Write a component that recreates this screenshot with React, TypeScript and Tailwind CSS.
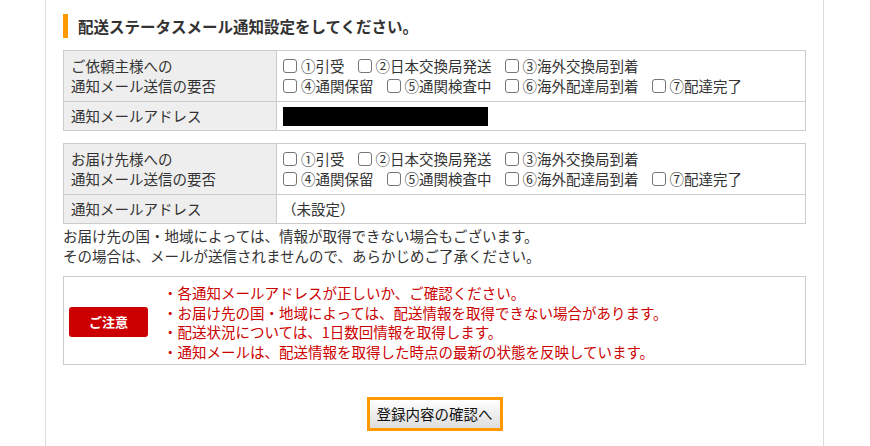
const font = { fontFamily: '"Noto Sans CJK JP", "Noto Sans", sans-serif' };

type Opt = { label: string };

const row1: Opt[] = [{ label: "①引受" }, { label: "②日本交換局発送" }, { label: "③海外交換局到着" }];
const row2: Opt[] = [
  { label: "④通関保留" },
  { label: "⑤通関検査中" },
  { label: "⑥海外配達局到着" },
  { label: "⑦配達完了" },
];

function Check({ label }: Opt) {
  return (
    <label className="flex items-center gap-[4px]">
      <input
        type="checkbox"
        className="m-0 block size-[14px] shrink-0 appearance-none rounded-[3px] border border-[#767676] bg-white"
      />
      <span>{label}</span>
    </label>
  );
}

function CheckRows() {
  return (
    <div className="flex flex-col">
      <div className="flex gap-[13px]">
        {row1.map((o) => (
          <Check key={o.label} {...o} />
        ))}
      </div>
      <div className="flex gap-[13px]">
        {row2.map((o) => (
          <Check key={o.label} {...o} />
        ))}
      </div>
    </div>
  );
}

function NotifyTable({ who, address }: { who: string; address: React.ReactNode }) {
  return (
    <table className="w-full border-collapse border border-[#cccccc]">
      <tbody>
        <tr>
          <th className="w-[213px] border border-[#cccccc] bg-[#eeeeee] px-[7px] py-[5px] text-left align-middle font-normal">
            {who}
            <br />
            通知メール送信の要否
          </th>
          <td className="border border-[#cccccc] px-[6px] py-[5px]">
            <CheckRows />
          </td>
        </tr>
        <tr>
          <th className="border border-[#cccccc] bg-[#eeeeee] px-[7px] py-[4px] text-left font-normal">
            通知メールアドレス
          </th>
          <td className="border border-[#cccccc] px-[5px] py-[4px]">{address}</td>
        </tr>
      </tbody>
    </table>
  );
}

export default function App() {
  return (
    <div className="min-h-[446px] bg-white text-[14.5px] leading-5 text-[#333333]" style={font}>
      <div className="mx-[45px] min-h-[446px] w-[779px] border-x border-[#dddddd] px-[17px] pt-[14px] pb-10">
        <h2 className="flex h-[24px] items-center border-l-[5px] border-[#ff9900] pl-[10px] text-[15.5px] font-bold">
          配送ステータスメール通知設定をしてください。
        </h2>

        <div className="mt-[12px]">
          <NotifyTable
            who="ご依頼主様への"
            address={<div className="ml-[1px] h-[19px] w-[205px] bg-black" />}
          />
        </div>

        <div className="mt-[12px]">
          <NotifyTable who="お届け先様への" address={<span>（未設定）</span>} />
        </div>

        <p className="mt-[2px] leading-[19.5px]">
          お届け先の国・地域によっては、情報が取得できない場合もございます。
          <br />
          その場合は、メールが送信されませんので、あらかじめご了承ください。
        </p>

        <div className="mt-[11px] flex items-center border border-[#cccccc] pt-[6px] pb-[3px] pl-[5px]">
          <div className="flex h-[30px] w-[79px] shrink-0 items-center justify-center rounded-[3px] bg-[#cc0000] text-[13px] font-bold text-white">
            ご注意
          </div>
          <ul className="ml-[15px] leading-[19.5px] text-[#cc0000]">
            <li>・各通知メールアドレスが正しいか、ご確認ください。</li>
            <li>・お届け先の国・地域によっては、配送情報を取得できない場合があります。</li>
            <li>・配送状況については、1日数回情報を取得します。</li>
            <li>・通知メールは、配送情報を取得した時点の最新の状態を反映しています。</li>
          </ul>
        </div>

        <div className="mt-[32px] flex justify-center">
          <button className="h-[34px] w-[136px] border-[3px] border-[#ff9900] bg-gradient-to-b from-white to-[#dddddd] text-[14.5px] text-[#111111]">
            登録内容の確認へ
          </button>
        </div>
      </div>
    </div>
  );
}
